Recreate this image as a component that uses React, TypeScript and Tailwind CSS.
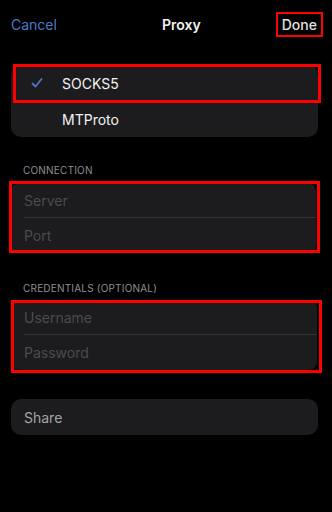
import React from "react";

const Row = ({ label, divider }: { label: string; divider?: boolean }) => (
  <div className="relative flex h-[35px] items-center pl-[13px] text-[14px] text-[#4b4b4d]">
    {label}
    {divider && <div className="absolute bottom-0 left-[13px] right-0 h-px bg-[#333336]" />}
  </div>
);

const Label = ({ children }: { children: React.ReactNode }) => (
  <div className="pl-[23px] text-[10px] leading-[12px] tracking-[0.2px] text-[#8f8f93]">{children}</div>
);

export default function App() {
  return (
    <div
      className="flex min-h-[512px] w-[332px] flex-col bg-black text-white"
      style={{ fontFamily: "Inter, 'Noto Sans', sans-serif" }}
    >
      {/* nav bar */}
      <div className="flex h-[48px] items-center justify-between pl-[11px] pr-[9px]">
        <span className="text-[14px] text-[#4c7bc9]">Cancel</span>
        <span className="pl-[30px] text-[14px] font-semibold text-[#f2f2f2]">Proxy</span>
        <span className="flex h-[25px] items-center border-2 border-[#ff0000] px-[4px] text-[14px] font-medium text-[#e0e0e0]">
          Done
        </span>
      </div>

      {/* type picker */}
      <div className="ml-[11px] mr-[14px] mt-[17px] rounded-[10px] bg-[#1c1c1e]">
        <div className="relative flex h-[36px] items-center text-[14px] text-[#f2f2f2]">
          <div className="absolute -top-[1px] -bottom-[2px] left-[2px] -right-[3px] border-[3px] border-[#ff0000]" />
          <svg width="12" height="12" viewBox="0 0 12 12" className="ml-[20px] mr-[19px]">
            <path d="M1.5 6.5 L4.5 9.5 L10.5 2" fill="none" stroke="#4a78c2" strokeWidth="1.8" strokeLinecap="round" strokeLinejoin="round" />
          </svg>
          SOCKS5
        </div>
        <div className="flex h-[36px] items-center pl-[51px] text-[14px] text-[#f2f2f2]">MTProto</div>
      </div>

      <div className="mt-[27px]">
        <Label>CONNECTION</Label>
      </div>
      <div className="relative ml-[11px] mr-[16px] mt-[7px] rounded-[8px] bg-[#1c1c1e]">
        <Row label="Server" divider />
        <Row label="Port" />
        <div className="absolute -top-[2px] bottom-0 -left-[2px] -right-[4px] border-[3px] border-[#ff0000]" />
      </div>

      <div className="mt-[29px]">
        <Label>CREDENTIALS (OPTIONAL)</Label>
      </div>
      <div className="relative ml-[11px] mr-[15px] mt-[6px] rounded-[8px] bg-[#1c1c1e]">
        <Row label="Username" divider />
        <Row label="Password" />
        <div className="absolute top-0 -bottom-[3px] left-0 -right-[5px] border-[3px] border-[#ff0000]" />
      </div>

      <div className="ml-[11px] mr-[14px] mt-[29px] flex h-[36px] items-center rounded-[10px] bg-[#1c1c1e] pl-[13px] text-[14px] text-[#a3a3a6]">
        Share
      </div>
    </div>
  );
}
